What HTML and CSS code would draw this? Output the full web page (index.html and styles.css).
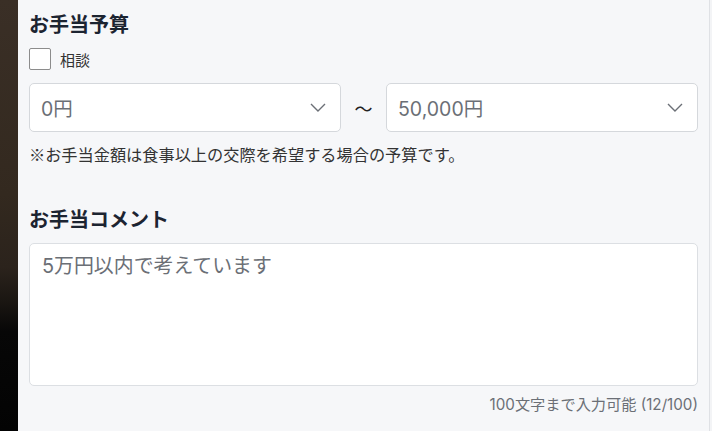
FILE: index.html
```html
<!DOCTYPE html>
<html lang="ja">
<head>
<meta charset="utf-8">
<title>お手当予算</title>
<link rel="stylesheet" href="styles.css">
</head>
<body>
<div class="backdrop"></div>
<main class="panel">
  <section class="field">
    <h2 class="field-title">お手当予算</h2>
    <label class="check-row">
      <input type="checkbox" class="check">
      <span class="check-label">相談</span>
    </label>
    <div class="range">
      <div class="select">
        <span class="select-value">0円</span>
        <svg class="chevron" width="16" height="9" viewBox="0 0 16 9"><path d="M1 1l7 7 7-7" fill="none" stroke="#6b6f76" stroke-width="1.4"/></svg>
      </div>
      <span class="tilde">〜</span>
      <div class="select">
        <span class="select-value">50,000円</span>
        <svg class="chevron" width="16" height="9" viewBox="0 0 16 9"><path d="M1 1l7 7 7-7" fill="none" stroke="#6b6f76" stroke-width="1.4"/></svg>
      </div>
    </div>
    <p class="note">※お手当金額は食事以上の交際を希望する場合の予算です。</p>
  </section>
  <section class="field field-comment">
    <h2 class="field-title">お手当コメント</h2>
    <textarea class="comment" placeholder="5万円以内で考えています"></textarea>
    <p class="counter">100文字まで入力可能 (12/100)</p>
  </section>
</main>
<div class="scroll"></div>
</body>
</html>
```

FILE: styles.css
```css
html, body {
  margin: 0;
  padding: 0;
  height: 431px;
  overflow: hidden;
}
body {
  display: flex;
  background: #f6f7f9;
  font-family: "Inter", "Noto Sans CJK JP", sans-serif;
  color: #333;
}
.backdrop {
  width: 18px;
  flex: none;
  background: linear-gradient(180deg, #3a2f26 0%, #33291f 45%, #2b231c 62%, #1a1612 70%, #070707 77%, #030303 100%);
}
.panel {
  flex: 1;
  background: #f6f7f9;
  padding: 10px 11px 0 11px;
  border-right: 1px solid #dfe1e5;
}
.scroll {
  width: 2px;
  flex: none;
  background: #f3f4f6;
}
.field-title {
  margin: 0;
  font-size: 20px;
  line-height: 28px;
  font-weight: 700;
  color: #1c2431;
  font-family: "Noto Sans CJK JP", sans-serif;
}
.check-row {
  display: flex;
  align-items: center;
  gap: 9px;
  margin-top: 10px;
  height: 22px;
}
.check {
  appearance: none;
  -webkit-appearance: none;
  margin: 0;
  width: 22px;
  height: 22px;
  border: 1.5px solid #8c8c8c;
  border-radius: 2px;
  background: #fff;
  box-sizing: border-box;
}
.check-label {
  font-size: 15px;
  color: #333;
  font-family: "Noto Sans CJK JP", sans-serif;
}
.range {
  display: grid;
  grid-template-columns: 1fr 45px 1fr;
  align-items: center;
  margin-top: 13px;
}
.select {
  height: 49px;
  box-sizing: border-box;
  border: 1px solid #d5d8dc;
  border-radius: 5px;
  background: #fff;
  display: flex;
  align-items: center;
  justify-content: space-between;
  padding: 0 14px 0 11px;
}
.select-value {
  font-size: 19.5px;
  color: #6b6f76;
}
.chevron {
  display: block;
}
.tilde {
  text-align: center;
  font-size: 18px;
  color: #222;
  font-family: "Noto Sans CJK JP", sans-serif;
}
.note {
  margin: 10px 0 0;
  font-size: 16.2px;
  line-height: 24px;
  color: #333;
  font-family: "Noto Sans CJK JP", sans-serif;
}
.field-comment {
  margin-top: 39px;
}
.comment {
  display: block;
  margin-top: 10px;
  width: 100%;
  height: 143px;
  box-sizing: border-box;
  border: 1px solid #dcdfe3;
  border-radius: 5px;
  background: #fff;
  padding: 7px 12px;
  font-family: "Inter", "Noto Sans CJK JP", sans-serif;
  font-size: 19.9px;
  line-height: 30px;
  color: #333;
  resize: none;
  outline: none;
}
.comment::placeholder {
  color: #6b6f76;
}
.counter {
  margin: 9px 0 0;
  text-align: right;
  font-size: 15.2px;
  line-height: 20px;
  color: #6b6f76;
}
```
